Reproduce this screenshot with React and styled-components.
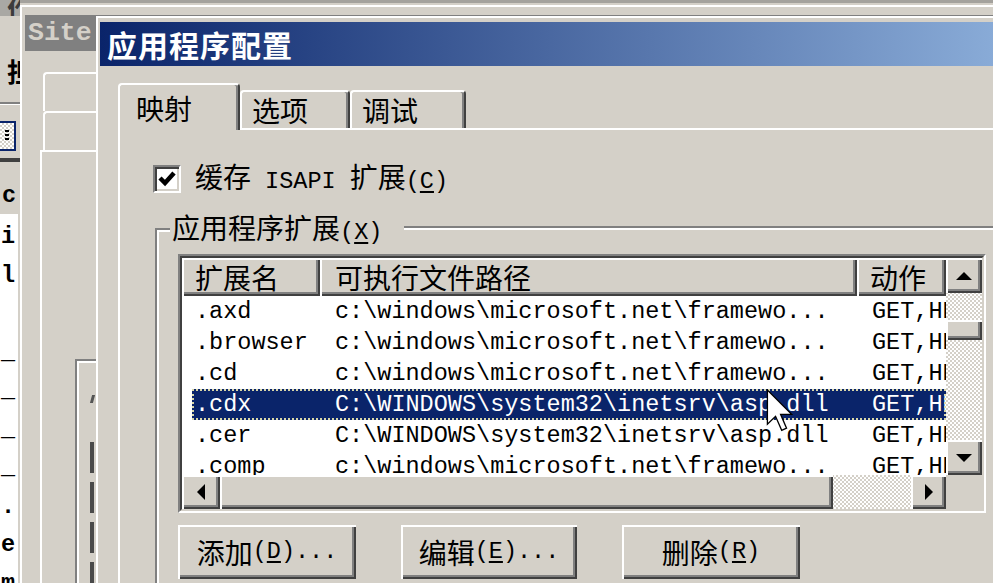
import React from 'react'
import styled, { createGlobalStyle, css } from 'styled-components'

const face = '#d4d0c8'
const shadow = '#808080'
const dark = '#404040'
const navy = '#0a246a'

const GlobalStyle = createGlobalStyle`
  html, body { margin: 0; padding: 0; }
  body {
    width: 993px;
    height: 583px;
    overflow: hidden;
    background: ${face};
    font-family: "Liberation Mono", "Noto Sans CJK SC", monospace;
    font-size: 23.5px;
    color: #000;
  }
`

const raised = css`
  background: ${face};
  box-shadow: inset 2px 2px #fff, inset -2px -2px ${dark}, inset -4px -4px ${shadow};
`

const checker = css`
  background-color: #fff;
  background-image: repeating-conic-gradient(${face} 0 25%, #fff 0 50%);
  background-size: 4px 4px;
`

const Han = styled.span`
  font-family: "Noto Sans CJK SC", sans-serif;
  font-size: 28px;
  line-height: 1;
`

const Hot = styled.span`
  text-decoration: underline;
  text-underline-offset: 3px;
`

const cjk = /([\u2E80-\u9FFF\uFF00-\uFFEF]+)/
const mix = (s, k) => s.split(cjk).map((p, i) => (i % 2 ? <Han key={k + i}>{p}</Han> : p))

// "&C" marks the underlined access key
const Label = ({ text }) => {
  const [a, hot, b] = text.split(/&(.)/)
  return (
    <>
      {mix(a, 'a')}
      {hot && <Hot>{hot}</Hot>}
      {b && mix(b, 'b')}
    </>
  )
}

const Desktop = styled.div`
  position: relative;
  width: 993px;
  height: 583px;
  overflow: hidden;
  background: ${face};
  background-image: linear-gradient(#a4a29d 0 3px, transparent 3px);
`

/* ---------- window far left ---------- */

const LeftWin = styled.div`
  position: absolute;
  left: 0;
  top: 0;
  width: 20px;
  height: 583px;
  display: flex;
  flex-direction: column;
  overflow: hidden;
  & > * { flex: none; }
`

const Clip = styled.div`
  display: flex;
  justify-content: flex-end;
  overflow: hidden;
  height: ${p => p.$h}px;
  margin-top: ${p => p.$top || 0}px;
  background: ${p => p.$bg || 'transparent'};
  color: ${p => p.$color || '#000'};
  font-family: "Noto Sans CJK SC", sans-serif;
  font-weight: 700;
  font-size: 26px;
  line-height: ${p => p.$h}px;
`

const ClipGlyph = styled.span`
  margin-right: -13px;
`

const LeftSep = styled.div`
  margin-top: 16px;
  height: 2px;
  background: ${shadow};
  border-bottom: 1px solid #fff;
`

const LeftIcon = styled.div`
  margin-top: 16px;
  width: 14px;
  height: 26px;
  border: 2px solid ${navy};
  border-left: none;
  ${checker};
  display: flex;
  align-items: center;
  justify-content: center;
`

const LeftIconDots = styled.div`
  width: 4px;
  height: 12px;
  background: repeating-linear-gradient(#000 0 2px, transparent 2px 4px);
`

const LeftRule = styled.div`
  margin-top: 7px;
  height: 4px;
  background: ${dark};
`

const LeftCell = styled.div`
  height: 52px;
  display: flex;
  align-items: flex-end;
  justify-content: flex-end;
  padding-right: 4px;
  line-height: 36px;
  font-weight: 700;
`

const LeftText = styled.pre`
  && { flex: 1 1 0; }
  min-height: 0;
  overflow: hidden;
  margin: 0 2px 0 0;
  padding: 4px 3px 0 0;
  background: #fff;
  font: inherit;
  font-weight: 700;
  line-height: 38.5px;
  text-align: right;
`

/* ---------- "Site" window behind ---------- */

const SiteWin = styled.div`
  position: absolute;
  left: 20px;
  top: 5px;
  width: 1000px;
  height: 620px;
  background: ${face};
  border-top: 2px solid #fff;
  border-left: 2px solid #fff;
  padding: 8px 0 0 3px;
  display: flex;
  flex-direction: column;
`

const SiteTitle = styled.div`
  height: 36px;
  background: ${shadow};
  color: ${face};
  padding-left: 3px;
  font-family: "Liberation Mono", monospace;
  font-weight: 700;
  font-size: 26.5px;
  line-height: 36px;
`

const SiteBody = styled.div`
  flex: 1;
  padding: 21px 0 0 15px;
  display: flex;
  flex-direction: column;
`

const SiteTab = styled.div`
  height: 37px;
  margin-left: 3px;
  border-top: 2px solid #fff;
  border-left: 2px solid #fff;
  border-top-left-radius: 4px;
`

const SitePanel = styled.div`
  flex: 1;
  border-top: 2px solid #fff;
  border-left: 2px solid #fff;
  padding: 207px 0 0 33px;
  display: flex;
  flex-direction: column;
`

const SiteGroup = styled.div`
  flex: 1;
  border-top: 2px solid ${shadow};
  border-left: 2px solid ${shadow};
  box-shadow: inset 2px 2px #fff;
  padding: 34px 0 0 13px;
  display: flex;
  flex-direction: column;
  gap: 9px;
`

const SiteTick = styled.div`
  width: 3px;
  height: 8px;
  margin: 0 0 30px 1px;
  background: #555;
  transform: skewX(-15deg);
`

const SiteBar = styled.div`
  width: 4px;
  height: 31px;
  background: #4a4a4a;
`

/* ---------- main dialog ---------- */

const Dialog = styled.div`
  position: absolute;
  left: 96px;
  top: 16px;
  width: 1100px;
  height: 620px;
  background: ${face};
  border-top: 2px solid #fff;
  border-left: 2px solid #fff;
  padding: 4px 0 0 2px;
  display: flex;
  flex-direction: column;
`

const TitleBar = styled.div`
  height: 44px;
  flex: none;
  display: flex;
  align-items: center;
  padding-left: 7px;
  background: linear-gradient(90deg, ${navy}, #a6caf0);
  color: #fff;
  font-family: "Noto Sans CJK SC", sans-serif;
  font-weight: 700;
  font-size: 30px;
  letter-spacing: 1px;
  line-height: 1;
`

const DialogBody = styled.div`
  flex: 1;
  padding: 17px 0 0 18px;
  display: flex;
  flex-direction: column;
`

const TabRow = styled.div`
  display: flex;
  align-items: flex-end;
  height: 45px;
  flex: none;
`

const Tab = styled.div`
  position: relative;
  z-index: ${p => (p.$active ? 1 : 0)};
  box-sizing: border-box;
  width: ${p => p.$w}px;
  height: ${p => (p.$active ? 47 : 38)}px;
  margin-bottom: ${p => (p.$active ? -2 : 0)}px;
  padding-left: ${p => (p.$active ? 16 : 10)}px;
  display: flex;
  align-items: center;
  background: ${face};
  border-top: 2px solid #fff;
  border-left: 2px solid #fff;
  border-right: 2px solid ${dark};
  border-radius: 4px 4px 0 0;
  box-shadow: inset -2px 0 ${shadow};
`

const TabPanel = styled.div`
  flex: 1;
  border-top: 2px solid #fff;
  border-left: 2px solid #fff;
  padding: 35px 0 0 33px;
  display: flex;
  flex-direction: column;
`

const CheckRow = styled.div`
  display: flex;
  align-items: center;
  gap: 14px;
  height: 28px;
  line-height: 28px;
  white-space: pre;
`

const CheckBox = styled.div`
  box-sizing: border-box;
  width: 28px;
  height: 28px;
  background: #fff;
  border: 2px solid;
  border-color: ${shadow} #fff #fff ${shadow};
  box-shadow: inset 2px 2px ${dark}, inset -2px -2px ${face};
  display: grid;
  place-items: center;
`

const Group = styled.div`
  flex: 1;
  margin-top: 20px;
  margin-left: 2px;
  display: flex;
  flex-direction: column;
`

const GroupHead = styled.div`
  display: flex;
  height: 30px;
`

const GroupStub = styled.div`
  box-sizing: border-box;
  width: 15px;
  height: 15px;
  align-self: flex-end;
  border-top: 2px solid ${shadow};
  border-left: 2px solid ${shadow};
  box-shadow: inset 2px 2px #fff;
`

const GroupLabel = styled.div`
  padding: 0 22px 0 2px;
  line-height: 30px;
  white-space: nowrap;
`

const GroupFill = styled.div`
  flex: 1;
  height: 15px;
  align-self: flex-end;
  border-top: 2px solid ${shadow};
  box-shadow: inset 0 2px #fff;
`

const GroupBody = styled.div`
  flex: 1;
  border-left: 2px solid ${shadow};
  box-shadow: inset 2px 0 #fff;
  padding: 11px 0 0 21px;
  display: flex;
  flex-direction: column;
`

const ListFrame = styled.div`
  box-sizing: border-box;
  width: 808px;
  height: 259px;
  border: 2px solid;
  border-color: ${shadow} #fff #fff ${shadow};
`

const ListInner = styled.div`
  box-sizing: border-box;
  height: 100%;
  border: 2px solid;
  border-color: ${dark} ${face} ${face} ${dark};
  display: grid;
  grid-template-columns: 1fr 36px;
  grid-template-rows: 1fr 34px;
  background: #fff;
`

const Viewport = styled.div`
  overflow: hidden;
  background: #fff;
`

const Header = styled.div`
  display: grid;
  grid-template-columns: 138px 537px 1fr;
  height: 38px;
`

const HeadCell = styled.div`
  ${raised};
  padding-left: ${p => p.$pad}px;
  display: flex;
  align-items: center;
  white-space: nowrap;
  overflow: hidden;
`

const Row = styled.div`
  display: grid;
  grid-template-columns: 128px 537px 1fr;
  margin-left: 10px;
  height: 31px;
  line-height: 32px;
  white-space: pre;
  background: ${p => (p.$sel ? navy : 'transparent')};
  color: ${p => (p.$sel ? '#fff' : '#000')};
  outline: ${p => (p.$sel ? '2px dotted #d8d6a8' : 'none')};
  outline-offset: -2px;
`

const Cell = styled.div`
  padding-left: ${p => p.$pad}px;
  overflow: hidden;
`

const VScroll = styled.div`
  display: flex;
  flex-direction: column;
  ${checker};
`

const HScroll = styled.div`
  display: flex;
  ${checker};
`

const ScrollBtn = styled.div`
  ${raised};
  flex: none;
  width: ${p => p.$w || 36}px;
  height: ${p => p.$h || 34}px;
  display: grid;
  place-items: center;
`

const Thumb = styled.div`
  ${raised};
  flex: none;
  width: ${p => (p.$w ? `${p.$w}px` : 'auto')};
  height: ${p => (p.$h ? `${p.$h}px` : 'auto')};
`

const TrackGap = styled.div`
  flex: ${p => (p.$size ? `0 0 ${p.$size}px` : '1')};
`

const Corner = styled.div`
  background: ${face};
`

const ButtonRow = styled.div`
  display: flex;
  gap: 45px;
  margin-top: 12px;
`

const PushButton = styled.div`
  ${raised};
  width: ${p => p.$w}px;
  height: 54px;
  display: flex;
  align-items: center;
  justify-content: center;
  white-space: pre;
  line-height: 1;
`

const Cursor = styled.svg`
  position: absolute;
  left: 766px;
  top: 389px;
  z-index: 5;
`

const Arrow = ({ dir }) => {
  const pts = {
    up: '0,8 8,0 16,8',
    down: '0,0 16,0 8,8',
    left: '8,0 8,16 0,8',
    right: '0,0 8,8 0,16',
  }[dir]
  const vertical = dir === 'up' || dir === 'down'
  return (
    <svg width={vertical ? 16 : 8} height={vertical ? 8 : 16} viewBox={vertical ? '0 0 16 8' : '0 0 8 16'}>
      <polygon points={pts} fill="#000" />
    </svg>
  )
}

const netPath = 'c:\\windows\\microsoft.net\\framewo...'
const aspPath = 'C:\\WINDOWS\\system32\\inetsrv\\asp.dll'

const rows = [
  { ext: '.axd', path: netPath },
  { ext: '.browser', path: netPath },
  { ext: '.cd', path: netPath },
  { ext: '.cdx', path: aspPath, sel: true },
  { ext: '.cer', path: aspPath },
  { ext: '.comp', path: netPath },
]

export default function App() {
  return (
    <>
      <GlobalStyle />
      <Desktop>
        <LeftWin>
          <Clip $h={16} $bg="#a9a8a4" $color="#3c3c3c">
            <ClipGlyph>作</ClipGlyph>
          </Clip>
          <Clip $h={30} $top={40}>
            <ClipGlyph>担</ClipGlyph>
          </Clip>
          <LeftSep />
          <LeftIcon>
            <LeftIconDots />
          </LeftIcon>
          <LeftRule />
          <LeftCell>c</LeftCell>
          <LeftText>{'i\nl\n\n_\n_\n_\n_\n.\ne\nm'}</LeftText>
        </LeftWin>

        <SiteWin>
          <SiteTitle>Site</SiteTitle>
          <SiteBody>
            <SiteTab />
            <SiteTab />
            <SitePanel>
              <SiteGroup>
                <SiteTick />
                <SiteBar />
                <SiteBar />
                <SiteBar />
                <SiteBar />
              </SiteGroup>
            </SitePanel>
          </SiteBody>
        </SiteWin>

        <Dialog>
          <TitleBar>应用程序配置</TitleBar>
          <DialogBody>
            <TabRow>
              <Tab $active $w={122}><Han>映射</Han></Tab>
              <Tab $w={110}><Han>选项</Han></Tab>
              <Tab $w={116}><Han>调试</Han></Tab>
            </TabRow>
            <TabPanel>
              <CheckRow>
                <CheckBox>
                  <svg width="20" height="18" viewBox="0 0 20 18">
                    <path d="M3 8 L8 13 L17 3" fill="none" stroke="#000" strokeWidth="4.5" />
                  </svg>
                </CheckBox>
                <span><Label text="缓存 ISAPI 扩展(&C)" /></span>
              </CheckRow>

              <Group>
                <GroupHead>
                  <GroupStub />
                  <GroupLabel><Label text="应用程序扩展(&X)" /></GroupLabel>
                  <GroupFill />
                </GroupHead>
                <GroupBody>
                  <ListFrame>
                    <ListInner>
                      <Viewport>
                        <Header>
                          <HeadCell $pad={13}><Han>扩展名</Han></HeadCell>
                          <HeadCell $pad={15}><Han>可执行文件路径</Han></HeadCell>
                          <HeadCell $pad={13}><Han>动作</Han></HeadCell>
                        </Header>
                        {rows.map(r => (
                          <Row key={r.ext} $sel={r.sel}>
                            <Cell $pad={3}>{r.ext}</Cell>
                            <Cell $pad={15}>{r.path}</Cell>
                            <Cell $pad={15}>GET,HEAD,POST</Cell>
                          </Row>
                        ))}
                      </Viewport>
                      <VScroll>
                        <ScrollBtn $h={35}><Arrow dir="up" /></ScrollBtn>
                        <TrackGap $size={27} />
                        <Thumb $h={20} />
                        <TrackGap />
                        <ScrollBtn $h={35}><Arrow dir="down" /></ScrollBtn>
                      </VScroll>
                      <HScroll>
                        <ScrollBtn $w={38}><Arrow dir="left" /></ScrollBtn>
                        <Thumb $w={613} />
                        <TrackGap />
                        <ScrollBtn $w={35}><Arrow dir="right" /></ScrollBtn>
                      </HScroll>
                      <Corner />
                    </ListInner>
                  </ListFrame>

                  <ButtonRow>
                    <PushButton $w={178}><Label text="添加(&D)..." /></PushButton>
                    <PushButton $w={176}><Label text="编辑(&E)..." /></PushButton>
                    <PushButton $w={178}><Label text="删除(&R)" /></PushButton>
                  </ButtonRow>
                </GroupBody>
              </Group>
            </TabPanel>
          </DialogBody>
        </Dialog>

        <Cursor width="27" height="44" viewBox="0 0 12 20">
          <path d="M0.5 0.5 L0.5 16 L4.2 12.4 L7 18.8 L9.2 17.8 L6.5 11.5 L11.5 11.5 Z" fill="#fff" stroke="#000" strokeWidth="0.6" />
        </Cursor>
      </Desktop>
    </>
  )
}
